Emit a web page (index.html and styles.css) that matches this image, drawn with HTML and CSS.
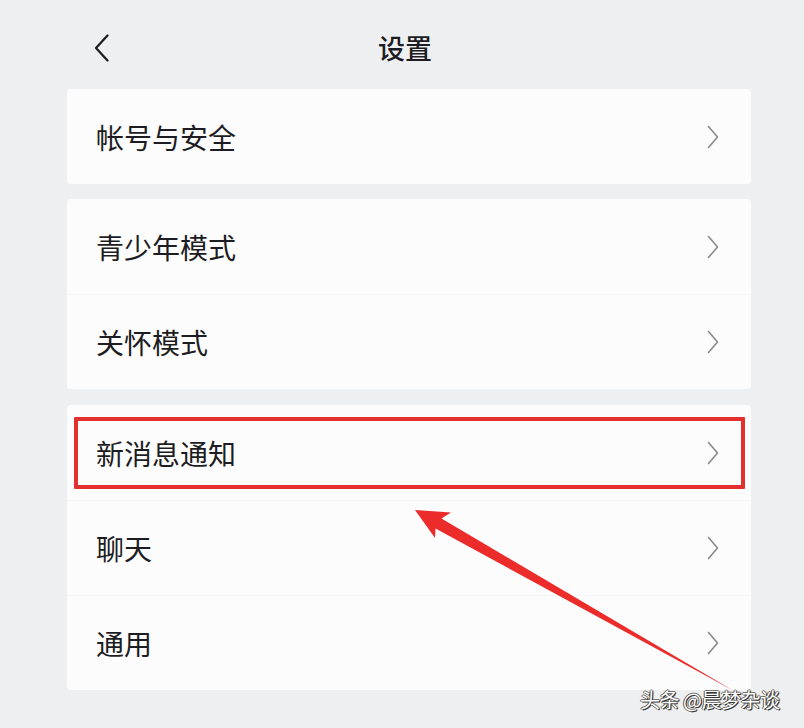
FILE: index.html
```html
<!DOCTYPE html>
<html lang="zh-CN">
<head>
<meta charset="utf-8">
<title>设置</title>
<link rel="stylesheet" href="styles.css">
</head>
<body>
<div class="page">
  <header class="topbar">
    <span class="back">
      <svg width="16" height="28" viewBox="0 0 16 28"><polyline points="13.5,1.5 2,14 13.5,26.5" fill="none" stroke="#1d1d1f" stroke-width="2.2" stroke-linecap="round" stroke-linejoin="round"/></svg>
    </span>
    <h1 class="title">设置</h1>
  </header>
  <main class="list">
    <section class="card">
      <div class="row"><span class="label">帐号与安全</span><svg class="chev" width="12" height="24" viewBox="0 0 12 24"><polyline points="1.5,1.5 10.5,12 1.5,22.5" fill="none" stroke="#8a8a8e" stroke-width="1.6" stroke-linecap="round" stroke-linejoin="round"/></svg></div>
    </section>
    <section class="card">
      <div class="row"><span class="label">青少年模式</span><svg class="chev" width="12" height="24" viewBox="0 0 12 24"><polyline points="1.5,1.5 10.5,12 1.5,22.5" fill="none" stroke="#8a8a8e" stroke-width="1.6" stroke-linecap="round" stroke-linejoin="round"/></svg></div>
      <div class="row"><span class="label">关怀模式</span><svg class="chev" width="12" height="24" viewBox="0 0 12 24"><polyline points="1.5,1.5 10.5,12 1.5,22.5" fill="none" stroke="#8a8a8e" stroke-width="1.6" stroke-linecap="round" stroke-linejoin="round"/></svg></div>
    </section>
    <section class="card">
      <div class="row highlighted"><span class="label">新消息通知</span><svg class="chev" width="12" height="24" viewBox="0 0 12 24"><polyline points="1.5,1.5 10.5,12 1.5,22.5" fill="none" stroke="#8a8a8e" stroke-width="1.6" stroke-linecap="round" stroke-linejoin="round"/></svg></div>
      <div class="row"><span class="label">聊天</span><svg class="chev" width="12" height="24" viewBox="0 0 12 24"><polyline points="1.5,1.5 10.5,12 1.5,22.5" fill="none" stroke="#8a8a8e" stroke-width="1.6" stroke-linecap="round" stroke-linejoin="round"/></svg></div>
      <div class="row"><span class="label">通用</span><svg class="chev" width="12" height="24" viewBox="0 0 12 24"><polyline points="1.5,1.5 10.5,12 1.5,22.5" fill="none" stroke="#8a8a8e" stroke-width="1.6" stroke-linecap="round" stroke-linejoin="round"/></svg></div>
    </section>
  </main>
  <svg class="arrow" width="804" height="728" viewBox="0 0 804 728">
    <polygon points="415,510 451,512.5 441.5,518.5 734,691 435.5,528.5 435,538" fill="#ec2b2b"/>
  </svg>
  <div class="watermark">头条 @晨梦杂谈</div>
</div>
</body>
</html>
```
FILE: styles.css
```css
html, body {
  margin: 0;
  padding: 0;
}
body {
  background: #eeeff1;
  font-family: "Noto Sans CJK SC", "Noto Sans", sans-serif;
  color: #1d1c22;
}
.page {
  position: relative;
  width: 804px;
  height: 728px;
  overflow: hidden;
  background: #eeeff1;
}
.topbar {
  height: 89px;
  display: flex;
  align-items: center;
  justify-content: center;
  position: relative;
}
.back {
  position: absolute;
  left: 94px;
  top: 34px;
  display: flex;
}
.title {
  margin: 0;
  font-size: 27px;
  font-weight: 500;
  letter-spacing: 0;
  margin-left: 6px;
  margin-top: 6px;
  color: #1d1c22;
}
.list {
  display: flex;
  flex-direction: column;
  gap: 15px;
  padding: 0 53px 0 67px;
}
.card {
  background: #fcfcfd;
  border-radius: 4px;
  display: flex;
  flex-direction: column;
}
.card:last-child {
  margin-top: 1px;
}
.row {
  position: relative;
  height: 95px;
  display: flex;
  align-items: center;
  justify-content: space-between;
  padding: 0 32px 0 29px;
  box-sizing: border-box;
}
.row + .row {
  border-top: 1px solid #f6f6f8;
}
.label {
  font-size: 28px;
  line-height: 1;
  color: #1d1c22;
}
.chev {
  display: block;
}
.highlighted::after {
  content: "";
  position: absolute;
  left: 7px;
  right: 6px;
  top: 12px;
  bottom: 11px;
  border: 4px solid #e42f2f;
  border-radius: 1px;
}
.arrow {
  position: absolute;
  left: 0;
  top: 0;
  pointer-events: none;
}
.watermark {
  position: absolute;
  left: 640px;
  top: 686px;
  font-size: 20px;
  line-height: 28px;
  color: #ffffff;
  letter-spacing: -0.5px;
  text-shadow: 1px 1px 0 #333, -1px 0 0 #555, 0 -1px 0 #777, 1px 0 1px #333;
}
```
